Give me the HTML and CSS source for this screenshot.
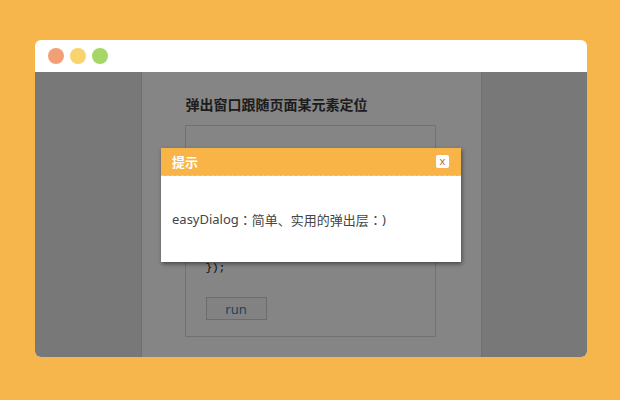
FILE: index.html
```html
<!DOCTYPE html>
<html lang="zh-CN">
<head>
    <meta charset="UTF-8">
    <meta name="viewport" content="width=device-width, initial-scale=1.0">
    <title>easyDialog</title>
    <link rel="stylesheet" href="styles.css">
</head>
<body>
    <div class="window">
        <div class="titlebar">
            <span class="dot red"></span>
            <span class="dot yellow"></span>
            <span class="dot green"></span>
        </div>
        <div class="page">
            <div class="side"></div>
            <div class="main">
                <h2>弹出窗口跟随页面某元素定位</h2>
                <div class="demo">
<pre class="code">easyDialog.open({
    container : 'box'
});</pre>
                    <button class="run">run</button>
                </div>
            </div>
            <div class="side"></div>
            <div class="overlay"></div>
        </div>
    </div>

    <div class="dialog">
        <div class="dialog-head">
            <span class="dialog-title">提示</span>
            <a class="dialog-close">x</a>
        </div>
        <div class="dialog-body">easyDialog<span class="colon">：</span>简单、实用的弹出层<span class="colon">：</span>)</div>
    </div>
</body>
</html>
```

FILE: styles.css
```css
body {
    margin: 0;
    padding: 40px 33px 0 35px;
    background: #f7b64b;
    font-family: "Noto Sans", "Noto Sans CJK SC", sans-serif;
    height: 400px;
    box-sizing: border-box;
}

.window {
    width: 552px;
    height: 317px;
    border-radius: 6px;
    overflow: hidden;
    background: #fff;
    display: flex;
    flex-direction: column;
}

.titlebar {
    height: 32px;
    display: flex;
    align-items: center;
    gap: 6px;
    padding-left: 13px;
    flex-shrink: 0;
}

.dot {
    width: 16px;
    height: 16px;
    border-radius: 50%;
}

.red { background: #f29f76; }
.yellow { background: #f7d46e; }
.green { background: #a4d765; }

.page {
    position: relative;
    flex: 1;
    display: flex;
}

.side {
    flex: 1;
    background: #e7e7e7;
}

.main {
    width: 341px;
    background: #fff;
    border-left: 1px solid #d6d6d6;
    border-right: 1px solid #d6d6d6;
    padding: 24px 0 0 44px;
    box-sizing: border-box;
}

.main h2 {
    margin: 0 0 12px;
    font-size: 14px;
    font-weight: bold;
    color: #383838;
    line-height: 17px;
}

.demo {
    width: 251px;
    height: 212px;
    border: 1px solid #d9d9d9;
    box-sizing: border-box;
    padding: 0 0 0 20px;
    margin-left: -1px;
}

.code {
    margin: 100px 0 0;
    font-family: "Liberation Mono", monospace;
    font-size: 11px;
    line-height: 17px;
    color: #111;
}

.run {
    margin-top: 20px;
    width: 61px;
    height: 23px;
    border: 1px solid #d0d0d0;
    background: #fafafa;
    color: #3f7fb2;
    font-family: "Noto Sans", sans-serif;
    font-size: 13px;
    padding: 0;
}

.overlay {
    position: absolute;
    inset: 0;
    background: rgba(0, 0, 0, 0.48);
}

.dialog {
    position: absolute;
    left: 161px;
    top: 148px;
    width: 300px;
    background: #fff;
    box-shadow: 1px 2px 4px rgba(0, 0, 0, 0.45);
}

.dialog-head {
    height: 28px;
    background: #f8b447;
    border-bottom: 1px dashed #f5c87a;
    box-sizing: border-box;
    display: flex;
    align-items: center;
    justify-content: space-between;
    padding: 0 12px 0 11px;
}

.dialog-title {
    color: #fff;
    font-size: 13px;
    font-weight: bold;
}

.dialog-close {
    width: 13px;
    height: 13px;
    background: #fff;
    border-radius: 2px;
    color: #b56a3c;
    font-size: 11px;
    line-height: 11px;
    text-align: center;
}

.dialog-body {
    height: 86px;
    display: flex;
    align-items: center;
    padding: 0 11px;
    font-size: 13px;
    color: #444;
}

.colon {
    font-family: "Noto Sans CJK TC", sans-serif;
}
```
